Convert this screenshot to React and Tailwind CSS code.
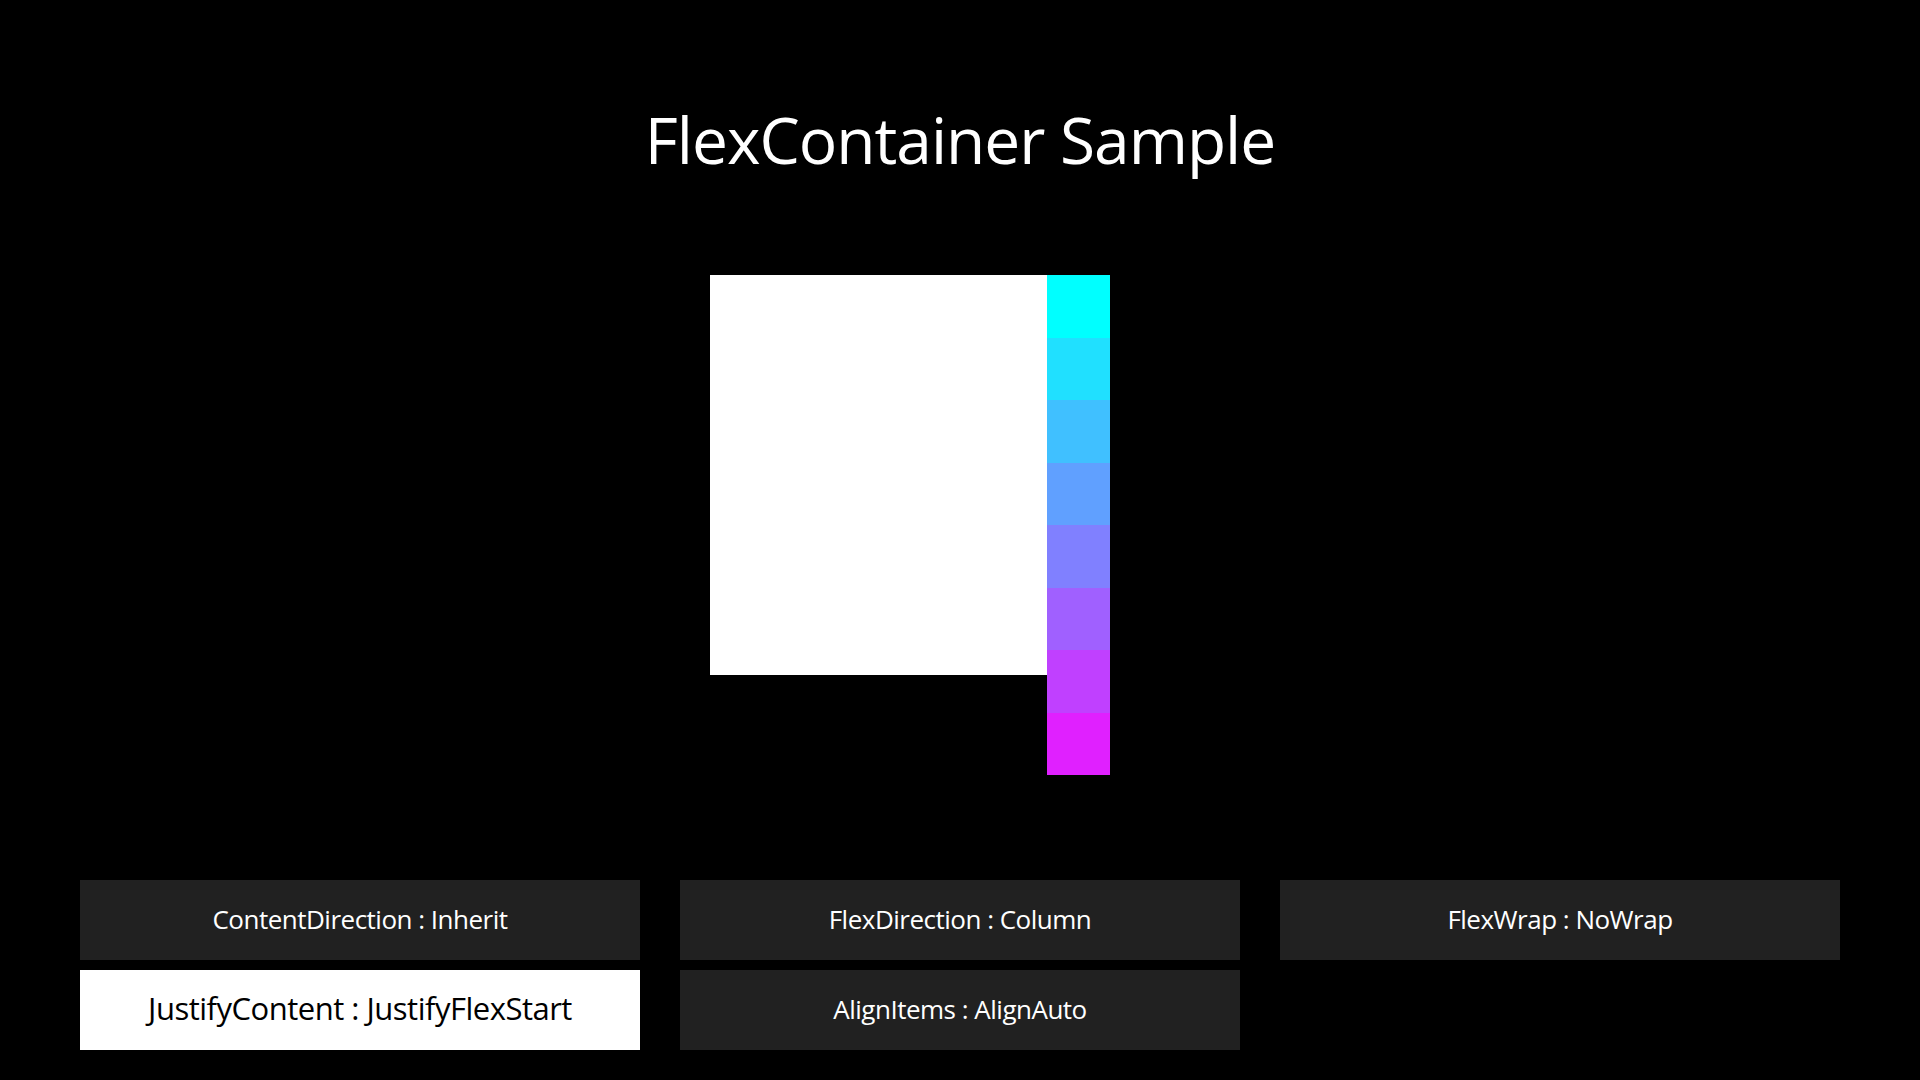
import React from "react";

const colors = ["#00ffff", "#20e0ff", "#40c0ff", "#60a0ff", "#8080ff", "#a060ff", "#c040ff", "#e020ff"];

function Btn({ children, active }) {
  return (
    <div
      className={
        "h-[80px] flex items-center justify-center pb-[3px] " +
        (active ? "bg-white text-black text-[31px]" : "bg-[#212121] text-white text-[26px]")
      }
    >
      <span className="leading-none tracking-[-0.5px]">{children}</span>
    </div>
  );
}

export default function App() {
  return (
    <div
      className="w-[1920px] h-[1080px] bg-black flex flex-col overflow-hidden"
      style={{ fontFamily: '"Open Sans", "Noto Sans", sans-serif' }}
    >
      <div className="h-[275px] flex justify-center pt-[108px]">
        <h1 className="text-white text-[64px] leading-none tracking-[-1px] font-normal h-fit">FlexContainer Sample</h1>
      </div>
      <div className="h-[605px] flex pl-[710px]">
        <div className="w-[337px] h-[400px] bg-white" />
        <div className="w-[63px] flex flex-col">
          {colors.map((c) => (
            <div key={c} className="h-[62.5px]" style={{ backgroundColor: c }} />
          ))}
        </div>
      </div>
      <div className="grid grid-cols-3 gap-x-[40px] gap-y-[10px] px-[80px]">
        <Btn>ContentDirection : Inherit</Btn>
        <Btn>FlexDirection : Column</Btn>
        <Btn>FlexWrap : NoWrap</Btn>
        <Btn active>JustifyContent : JustifyFlexStart</Btn>
        <Btn>AlignItems : AlignAuto</Btn>
      </div>
    </div>
  );
}
